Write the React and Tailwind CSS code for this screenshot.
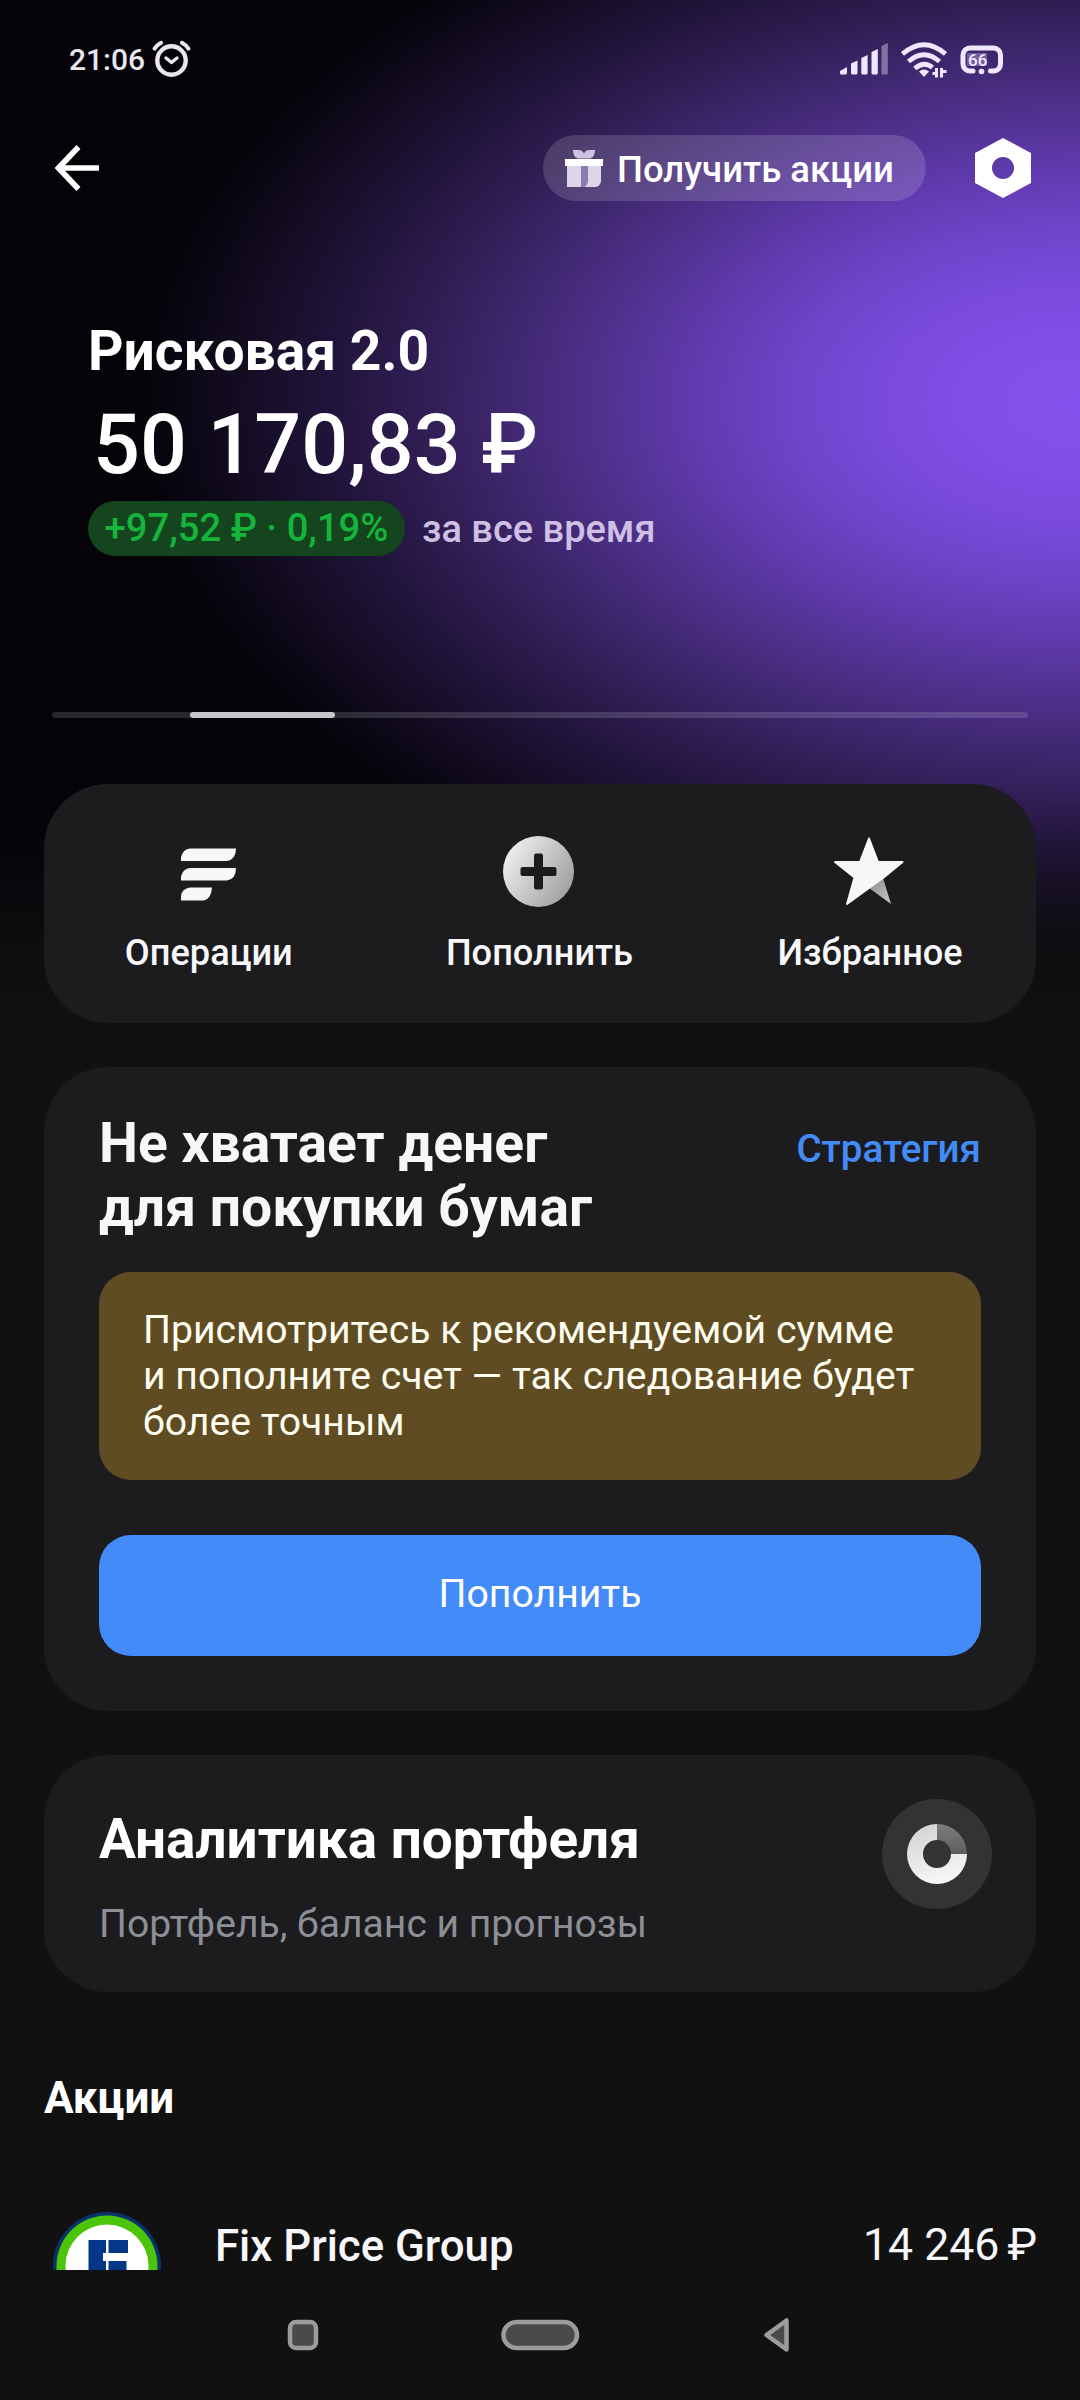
const glow =
  "bg-[radial-gradient(ellipse_950px_575px_at_1080px_403px,#8551ec_0%,#8250e9_10%,#7a4bde_20%,#6f45ca_30%,#613bb0_40%,#513290_50%,#402871_60%,#2f1d52_70%,#1f1338_80%,#140d23_88%,#0a0612_95%,#050208_100%)]";

function StatusBar() {
  return (
    <div className="h-[120px] pl-[69px] pr-[76px] flex items-center justify-between text-[#e9e6ef]">
      <div className="flex items-center gap-[7px]">
        <span className="text-[30px] font-medium leading-none">21:06</span>
        <svg width="39" height="38" viewBox="0 0 39 38" fill="none" stroke="currentColor" strokeLinecap="round" className="mt-[-2px]">
          <circle cx="19.5" cy="20.5" r="14.2" strokeWidth="4.4" />
          <path d="M14 18l5.5 4.5L25 18" strokeWidth="3.4" strokeLinejoin="round" />
          <path d="M2.6 8.6Q5 5 9 2.8M36.4 8.6Q34 5 30 2.8" strokeWidth="4" />
        </svg>
      </div>
      <div className="flex items-center gap-[13px] text-[#efe6ff]">
        <svg width="48" height="34" viewBox="0 0 48 34" fill="currentColor">
          <path d="M0 28l7-4v6a1.5 1.5 0 0 1-1.5 1.5h-4A1.5 1.5 0 0 1 0 30z" />
          <path d="M11 20.5l6.5-3V30a1.5 1.5 0 0 1-1.5 1.5h-3.5A1.5 1.5 0 0 1 11 30z" />
          <path d="M21.3 15l6.3-3v18a1.5 1.5 0 0 1-1.5 1.5h-3.3a1.5 1.5 0 0 1-1.5-1.5z" />
          <path d="M31.5 9l6.3-3v24a1.5 1.5 0 0 1-1.5 1.5h-3.3a1.5 1.5 0 0 1-1.5-1.5z" />
          <path opacity=".4" d="M41.5 3l6.3-3v30a1.5 1.5 0 0 1-1.5 1.5h-3.3a1.5 1.5 0 0 1-1.5-1.5z" />
        </svg>
        <svg width="46" height="36" viewBox="0 0 46 36" fill="none" stroke="currentColor" strokeWidth="4.8">
          <path d="M1.5 12Q23-6.5 44.5 12" />
          <path d="M7.5 19.5Q23 6 38.5 19.5" />
          <path d="M13.8 26.5Q23 18.5 31.5 25.5" />
          <path d="M18 29.5Q23 25.5 28 29.5L23 35z" fill="currentColor" stroke="none" />
          <path d="M35.500 26v9.500M40.500 35.500V26" strokeWidth="3" />
          <path d="M31.500 31.500h4M40.500 29.500h5" strokeWidth="3" />
        </svg>
        <svg width="44" height="31" viewBox="0 0 44 31">
          <path
            d="M13 26H10A7 7 0 0 1 3 19V10A7 7 0 0 1 10 3H33.500A7 7 0 0 1 40.500 10V19A7 7 0 0 1 33.500 26H30.500"
            fill="none"
            stroke="currentColor"
            strokeWidth="5"
            strokeLinecap="round"
          />
          <circle cx="21.5" cy="26.5" r="2.8" fill="currentColor" />
          <rect x="7" y="8" width="20" height="13" fill="currentColor" opacity=".3" />
          <text x="8" y="20.5" fontSize="17" fontWeight="500" fill="currentColor">66</text>
        </svg>
      </div>
    </div>
  );
}

function Header() {
  return (
    <div className="h-24 pl-[55px] pr-[49px] flex items-center">
      <svg width="45" height="46" viewBox="0 0 45 46" fill="none" stroke="#fff" strokeWidth="5.6">
        <path d="M44 23H4M23.5 2L3.5 23l20 21" />
      </svg>
      <button className="ml-auto h-[66px] w-[383px] pl-[22px] rounded-full bg-white/15 flex items-center text-white text-[36.5px] font-medium">
        <svg width="38" height="38" viewBox="0 0 38 38" className="mr-[14px]">
          <path d="M2 17h34v15a6 6 0 0 1-6 6H2z" fill="#ddd5ea" />
          <path d="M16 17h7v14q0 5-3.5 7H16z" fill="#8d7bb0" />
          <rect y="10" width="38" height="7" fill="#fff" />
          <path d="M19 9.5h-6Q8 8 8 1h5q5 0 6 4 1-4 6-4h5q0 7-5 8.5z" fill="#cfc3e2" />
        </svg>
        <span className="pt-[4px]">Получить акции</span>
      </button>
      <svg width="56" height="60" viewBox="0 0 56 60" fill="#fff" className="ml-[49px]">
        <path fillRule="evenodd" d="M28 0l28 15v30L28 60 0 45V15zM28 19a11 11 0 1 0 0 22 11 11 0 0 0 0-22z" />
      </svg>
    </div>
  );
}

function Summary() {
  return (
    <div className="mt-[103px] pl-[88px] text-white">
      <h1 className="text-[55.2px] leading-[64px] font-bold">Рисковая 2.0</h1>
      <div className="mt-[14px] ml-[5px] text-[82.6px] leading-[96px] font-medium whitespace-pre">50 170,83 ₽</div>
      <div className="mt-2 h-[55px] flex items-center">
        <span className="h-[55px] w-[317px] rounded-full bg-[#15451f] text-[#14b53a] text-[38.2px] font-medium flex items-center justify-center">
          +97,52 ₽ · 0,19%
        </span>
        <span className="ml-[17px] pt-[1px] text-[38px] font-medium text-[#cfbfe4]">за все время</span>
      </div>
    </div>
  );
}

function Pager() {
  return (
    <div className="mt-[156px] mx-[52px] h-[6px] rounded-full bg-white/15">
      <div className="ml-[138px] w-[145px] h-full rounded-full bg-[#c8c4cc]" />
    </div>
  );
}

function OperationsIcon() {
  return (
    <svg width="72" height="72" viewBox="0 0 72 72" fill="#f7f7fa">
      <path d="M10 22q2-8 9-8.500h46q0 11-9 12.500H10z" />
      <path d="M10 41.500q2-8 9-8.500h46q0 11-9 12.500H10z" />
      <path d="M10 61q1-7.500 9-8.500h22q-.5 11-8 13H10z" />
    </svg>
  );
}

function PlusIcon() {
  return (
    <svg width="72" height="72" viewBox="0 0 72 72">
      <linearGradient id="plus" x1="0" y1=".2" x2="1" y2=".8">
        <stop offset="0" stopColor="#f2f2f3" />
        <stop offset="1" stopColor="#9b9c9e" />
      </linearGradient>
      <circle cx="36.5" cy="36.5" r="35.5" fill="url(#plus)" />
      <rect x="32" y="18.5" width="9" height="36" rx="2" fill="#1c1c1e" />
      <rect x="18.5" y="32" width="36" height="9" rx="2" fill="#1c1c1e" />
    </svg>
  );
}

function StarIcon() {
  return (
    <svg width="72" height="72" viewBox="0 0 72 72" strokeLinejoin="round">
      <linearGradient id="star" x1="0" y1="0" x2="1" y2="1">
        <stop offset="0" stopColor="#88898c" />
        <stop offset="1" stopColor="#c9c9cb" />
      </linearGradient>
      <path d="M50 43l8 26L36 53z" fill="url(#star)" />
      <path d="M36 3.500l9 23.500h24.500L50 43 36 53 14 69l7.500-26.500L2 27H27z" fill="#f7f7fa" stroke="#f7f7fa" strokeWidth="2" />
    </svg>
  );
}

const actions = [
  { label: "Операции", Icon: OperationsIcon },
  { label: "Пополнить", Icon: PlusIcon },
  { label: "Избранное", Icon: StarIcon },
];

function Actions() {
  return (
    <div className="mt-[66px] mx-[44px] h-[239px] rounded-[64px] bg-[#1c1c1e] grid grid-cols-3 pt-[51px]">
      {actions.map(({ label, Icon }) => (
        <div key={label} className="flex flex-col items-center pr-[1px] text-[#f7f7fa]">
          <div className="pr-[3px]">
            <Icon />
          </div>
          <span className="mt-[25px] text-[36.2px] leading-[42px] font-medium">{label}</span>
        </div>
      ))}
    </div>
  );
}

function TopUpCard() {
  return (
    <div className="mt-[44px] mx-[44px] h-[644px] rounded-[64px] bg-[#1c1c1e] px-[55px] pt-[44px]">
      <div className="flex justify-between items-start">
        <h2 className="text-[55.2px] leading-[64px] font-bold text-[#f7f7fa]">
          Не хватает денег
          <br />
          для покупки бумаг
        </h2>
        <a className="mt-[15px] text-[38.6px] leading-[46px] font-medium text-[#428bf9]">Стратегия</a>
      </div>
      <p className="mt-[33px] h-[208px] rounded-[32px] bg-[#5f4c22] pl-[44px] pt-[35px] text-[39.2px] leading-[46px] text-[#fffdf0]">
        Присмотритесь к рекомендуемой сумме
        <br />
        и пополните счет — так следование будет
        <br />
        более точным
      </p>
      <button className="mt-[55px] h-[121px] w-full rounded-[32px] bg-[#428bf9] text-white text-[39.2px] pb-[2px]">Пополнить</button>
    </div>
  );
}

function AnalyticsCard() {
  return (
    <div className="mt-[44px] mx-[44px] h-[237px] rounded-[64px] bg-[#1c1c1e] pl-[55px] pr-[44px] pt-[44px] flex justify-between">
      <div>
        <h2 className="mt-[8px] text-[54.9px] leading-[64px] font-bold text-white">Аналитика портфеля</h2>
        <p className="mt-[30px] text-[39.1px] leading-[46px] text-[#8d8f96]">Портфель, баланс и прогнозы</p>
      </div>
      <div className="size-[110px] rounded-full bg-[#333] flex items-center justify-center">
        <svg width="60" height="60" viewBox="0 0 60 60">
          <linearGradient id="ring" x1="0" y1="0" x2=".3" y2="1">
            <stop offset="0" stopColor="#cfd0d0" />
            <stop offset="1" stopColor="#f6f6f6" />
          </linearGradient>
          <linearGradient id="slice" x1="0" y1="0" x2="0" y2="1">
            <stop offset="0" stopColor="#7d7e7e" />
            <stop offset="1" stopColor="#5c5d5d" />
          </linearGradient>
          <path d="M30 0a30 30 0 1 0 30 30H44a14 14 0 1 1-14-14z" fill="url(#ring)" />
          <path d="M30 0a30 30 0 0 1 30 30H44a14 14 0 0 0-14-14z" fill="url(#slice)" />
        </svg>
      </div>
    </div>
  );
}

function Stocks() {
  return (
    <div className="h-[278px] pt-[80px] pl-[44px] pr-[43px]">
      <h3 className="text-[44px] leading-[52px] font-bold text-white">Акции</h3>
      <div className="mt-[88px] pl-[9px] flex items-start">
        {/* logo is scrolled under the nav bar */}
        <div className="h-[58px] overflow-hidden">
          <svg width="108" height="108" viewBox="0 0 108 108">
            <circle cx="54" cy="54" r="54" fill="#08326b" />
            <circle cx="54" cy="54" r="50.5" fill="#4cc508" />
            <circle cx="54" cy="54" r="41.5" fill="#fff" />
            <path d="M35.5 28H53v13h-3v8h3v31H35.5zM55.500 28H75v13H55.500zM55.500 49H73.500v11h-18z" fill="#043787" />
          </svg>
        </div>
        <div className="mt-[8px] ml-[54px] flex-1 flex justify-between leading-[52px] text-[#f7f7fa]">
          <span className="text-[43.8px] font-medium">Fix Price Group</span>
          <span className="mt-[-1px] text-[44.6px] whitespace-pre">
            14 246<span className="ml-[-3px]"> ₽</span>
          </span>
        </div>
      </div>
    </div>
  );
}

function NavBar() {
  return (
    <div className="h-[130px] flex items-start pt-[46px] pl-[287px]">
      <svg width="520" height="38" viewBox="0 0 520 38" fill="#4a4a4a" stroke="#9c9c9c" strokeWidth="4.5">
        <rect x="3" y="6" width="26" height="26" rx="6" />
        <rect x="216.5" y="6" width="73.5" height="26" rx="13" />
        <path d="M499.5 4.5v29L479.5 19z" strokeLinejoin="round" />
      </svg>
    </div>
  );
}

export default function App() {
  return (
    <div className="w-[1080px] h-[2400px] overflow-hidden bg-[#111] font-[Roboto,sans-serif]">
      <div className={`h-[1023px] ${glow}`}>
        <div className="h-full bg-[linear-gradient(to_bottom,transparent_815px,#111_1010px)] flex flex-col">
          <StatusBar />
          <Header />
          <Summary />
          <Pager />
          <Actions />
        </div>
      </div>
      <TopUpCard />
      <AnalyticsCard />
      <Stocks />
      <NavBar />
    </div>
  );
}
